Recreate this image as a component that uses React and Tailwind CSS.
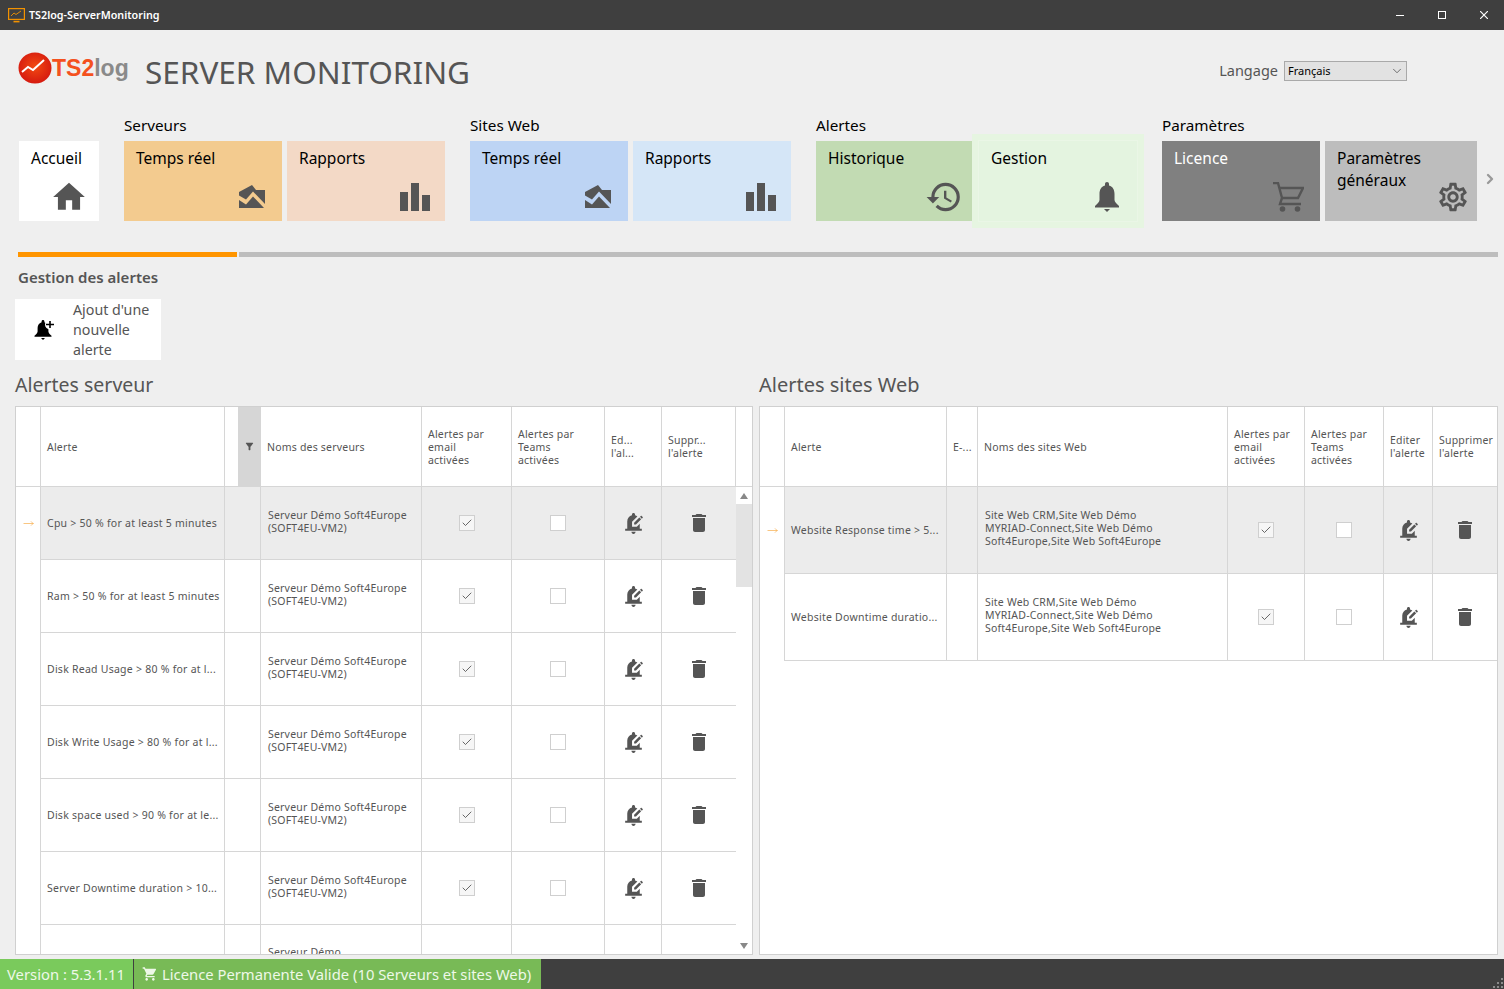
import { Check, ChevronRight, ChevronDown, MoveRight } from 'lucide-react';
import { MdHome, MdHistory, MdOutlineSettings, MdEditNotifications, MdDelete, MdShoppingCart, MdFilterAlt } from 'react-icons/md';

const serverRows = [
  { alert: 'Cpu > 50 % for at least 5 minutes' },
  { alert: 'Ram > 50 % for at least 5 minutes' },
  { alert: 'Disk Read Usage > 80 % for at l...' },
  { alert: 'Disk Write Usage > 80 % for at l...' },
  { alert: 'Disk space used > 90 % for at le...' },
  { alert: 'Server Downtime duration > 10...' },
];

const webRows = [
  { alert: 'Website Response time > 5...' },
  { alert: 'Website Downtime duratio...' },
];

const serverCols = 'grid grid-cols-[25px_184px_36px_161px_90px_93px_57px_74px]';
const webCols = 'grid grid-cols-[25px_162px_31px_250px_77px_79px_49px_64px]';

const AreaIcon = () => (
  <svg width="26" height="23" viewBox="0 0 26 23" fill="#555">
    <path d="M0 7 L13 0 L17 5 L26 5 L26 19 L14 6.5 L7 14.5 L0 10.5 Z" />
    <path d="M0 15 L7 19.5 L14 11.5 L25 23 L0 23 Z" />
  </svg>
);

const BarsIcon = () => (
  <svg width="30" height="28" viewBox="0 0 30 28" fill="#555">
    <rect x="0" y="9" width="8" height="19" />
    <rect x="11" y="0" width="8" height="28" />
    <rect x="22" y="12" width="8" height="16" />
  </svg>
);

const BellIcon = () => (
  <svg width="24" height="30" viewBox="0 0 24 30" fill="#555">
    <path d="M12 0 C13.2 0 14 .8 14 2 V3.5 C18 4.5 19.5 8 19.5 12 V18 C19.5 20 22 22 24 24 V25.5 H0 V24 C2 22 4.5 20 4.5 18 V12 C4.5 8 6 4.5 10 3.5 V2 C10 .8 10.8 0 12 0 Z" />
    <path d="M9 27 H15 L12 30 Z" />
  </svg>
);

const BellPlusIcon = () => (
  <svg width="21" height="21" viewBox="0 0 21 21" fill="#000">
    <path d="M9 1 C9.8 1 10.4 1.6 10.4 2.4 V3.2 C13.2 4 14.4 6.4 14.4 9 V12.5 C14.4 14 16 15.4 17.5 16.8 V17.8 H0.5 V16.8 C2 15.4 3.6 14 3.6 12.5 V9 C3.6 6.4 4.8 4 7.6 3.2 V2.4 C7.6 1.6 8.2 1 9 1 Z" />
    <path d="M7 19 H11 L9 21 Z" />
    <circle cx="16" cy="5.5" r="5" fill="#fff" />
    <path d="M15.2 2 H16.8 V4.7 H20 V6.3 H16.8 V9 H15.2 V6.3 H12 V4.7 H15.2 Z" />
  </svg>
);

const CartIcon = () => (
  <svg width="31" height="30" viewBox="0 0 31 30" fill="none" stroke="#555" strokeWidth="2.4">
    <path d="M0 1 H5 L9 16 L7 22 H28" />
    <path d="M7 6 H30 L25 16 H9" />
    <circle cx="9.5" cy="27" r="2.8" fill="#555" stroke="none" />
    <circle cx="24.5" cy="27" r="2.8" fill="#555" stroke="none" />
  </svg>
);

const Tile = ({ label, bg, text = 'text-black', icon, iconPos = 'bottom-[13px] right-[17px]', wide = 'w-[158px]', extra = '' }) => (
  <div className={`relative h-20 ${wide} ${bg} ${extra} px-3 pt-[6px] text-[15.5px] leading-[22px] ${text}`}>
    {label}
    <div className={`absolute ${iconPos}`}>{icon}</div>
  </div>
);

const Group = ({ title, children }) => (
  <div>
    <div className="h-[31px] pt-[4px] text-[15.25px] leading-[22px] text-black">{title}</div>
    <div className="flex gap-[5px]">{children}</div>
  </div>
);

const Cell = ({ children, line = true, center = false, className = '' }) => (
  <div className={`flex items-center border-[#d6d6d6] ${line ? 'border-r' : ''} ${center ? 'justify-center' : ''} ${className}`}>
    {children}
  </div>
);

const CheckBox = ({ checked }) => (
  <div className={`flex h-4 w-4 items-center justify-center border border-[#cfcfcf] ${checked ? 'bg-[#f6f6f6]' : 'bg-white'}`}>
    {checked && <Check size={12} strokeWidth={1.6} color="#444" />}
  </div>
);

const HeadText = ({ children, tight }) => (
  <div className={`px-[6px] text-[10.5px] leading-[13px] tracking-[0.2px] text-[#555] ${tight ? '' : 'pt-[2px]'}`}>{children}</div>
);

const Row = ({ cols, height, selected, alert, names, namesPad, blank }) => {
  const bg = selected ? 'bg-[#ececec]' : '';
  return (
    <div className={`${cols} ${height}`}>
      <Cell center className="text-[#f59a23]">
        {selected && <MoveRight size={11} strokeWidth={1.25} />}
      </Cell>
      <Cell className={`border-b px-[6px] pt-[2px] text-[10.5px] tracking-[0.25px] whitespace-nowrap text-[#555] ${bg}`}>
        {alert}
      </Cell>
      <Cell className={`border-b ${bg}`} />
      <Cell className={`border-b px-[7px] text-[10.5px] leading-[13px] tracking-[0.2px] text-[#555] ${namesPad} ${bg}`}>
        <div>{names}</div>
      </Cell>
      <Cell center className={`border-b ${bg}`}>
        {!blank && <CheckBox checked />}
      </Cell>
      <Cell center className={`border-b ${bg}`}>
        {!blank && <CheckBox />}
      </Cell>
      <Cell center className={`border-b ${bg}`}>
        {!blank && <MdEditNotifications size={25} color="#555" />}
      </Cell>
      <Cell center line={false} className={`border-b ${bg}`}>
        {!blank && <MdDelete size={24} color="#555" />}
      </Cell>
    </div>
  );
};

const ServerTable = () => (
  <div className="flex h-[549px] w-[738px] flex-col overflow-hidden border border-[#d0d0d0] bg-white">
    <div className="flex h-20 shrink-0 border-b border-[#d6d6d6]">
      <div className={`${serverCols} h-full`}>
        <Cell />
        <Cell><HeadText>Alerte</HeadText></Cell>
        <Cell className="justify-end">
          <div className="flex h-full w-[22px] items-center justify-center bg-[#d6d6d6]">
            <MdFilterAlt size={11} color="#555" />
          </div>
        </Cell>
        <Cell><HeadText>Noms des serveurs</HeadText></Cell>
        <Cell><HeadText>Alertes par<br />email<br />activées</HeadText></Cell>
        <Cell><HeadText>Alertes par<br />Teams<br />activées</HeadText></Cell>
        <Cell><HeadText tight>Ed...<br />l'al...</HeadText></Cell>
        <Cell><HeadText tight>Suppr...<br />l'alerte</HeadText></Cell>
      </div>
    </div>
    <div className="flex min-h-0 flex-1">
      <div className="w-[720px] overflow-hidden">
        {serverRows.map((r, i) => (
          <Row
            key={r.alert}
            cols={serverCols}
            height="h-[73px]"
            namesPad="pb-[2px]"
            selected={i === 0}
            alert={r.alert}
            names={<>Serveur Démo Soft4Europe<br />(SOFT4EU-VM2)</>}
          />
        ))}
        <Row cols={serverCols} height="h-[73px]" namesPad="pb-[4px]" blank alert="" names={<>Serveur Démo<br />Soft4Europe</>} />
      </div>
      <div className="flex w-4 flex-col">
        <div className="flex h-[17px] items-center justify-center">
          <div className="h-0 w-0 border-x-[4px] border-b-[6px] border-x-transparent border-b-[#888]" />
        </div>
        <div className="h-[83px] bg-[#e3e3e3]" />
        <div className="flex-1" />
        <div className="flex h-[17px] items-center justify-center">
          <div className="h-0 w-0 border-x-[4px] border-t-[6px] border-x-transparent border-t-[#888]" />
        </div>
      </div>
    </div>
  </div>
);

const WebTable = () => (
  <div className="h-[549px] w-[739px] border border-[#d0d0d0] bg-white">
    <div className="h-20 border-b border-[#d6d6d6]">
      <div className={`${webCols} h-full`}>
        <Cell />
        <Cell><HeadText>Alerte</HeadText></Cell>
        <Cell><HeadText>E-...</HeadText></Cell>
        <Cell><HeadText>Noms des sites Web</HeadText></Cell>
        <Cell><HeadText>Alertes par<br />email<br />activées</HeadText></Cell>
        <Cell><HeadText>Alertes par<br />Teams<br />activées</HeadText></Cell>
        <Cell><HeadText tight>Editer<br />l'alerte</HeadText></Cell>
        <Cell line={false}><HeadText tight>Supprimer<br />l'alerte</HeadText></Cell>
      </div>
    </div>
    {webRows.map((r, i) => (
      <Row
        key={r.alert}
        cols={webCols}
        height="h-[87px]"
        namesPad="pb-[4px]"
        selected={i === 0}
        alert={r.alert}
        names={<>Site Web CRM,Site Web Démo<br />MYRIAD-Connect,Site Web Démo<br />Soft4Europe,Site Web Soft4Europe</>}
      />
    ))}
  </div>
);

export default function App() {
  return (
    <div className="flex h-[989px] w-[1504px] flex-col overflow-hidden bg-[#efefef] font-['Noto_Sans',sans-serif]">
      {/* Title bar */}
      <div className="flex h-[30px] shrink-0 items-center bg-[#3f3f3f] pl-2 text-white">
        <svg width="17" height="15" viewBox="0 0 17 15" fill="none" stroke="#f39200" strokeWidth="1.2">
          <rect x="0.6" y="0.6" width="15.8" height="10.8" />
          <path d="M3 8 L6 5 L8 6.5 L13 3" strokeWidth="0.9" />
          <path d="M5.5 13.6 H11.5" strokeWidth="1.6" />
        </svg>
        <span className="ml-1 text-[10.75px] font-semibold">TS2log-ServerMonitoring</span>
        <div className="ml-auto flex items-center">
          <div className="flex w-[42px] justify-center">
            <svg width="8" height="8" viewBox="0 0 8 8" stroke="#fff"><path d="M0 4.5 H8" /></svg>
          </div>
          <div className="flex w-[42px] justify-center">
            <svg width="8" height="8" viewBox="0 0 8 8" fill="none" stroke="#fff"><rect x="0.5" y="0.5" width="7" height="7" /></svg>
          </div>
          <div className="flex w-[41px] justify-center">
            <svg width="8" height="8" viewBox="0 0 8 8" stroke="#fff" strokeWidth="1.2"><path d="M0 0 L8 8 M8 0 L0 8" /></svg>
          </div>
        </div>
      </div>

      {/* Logo and language */}
      <div className="flex h-[80px] shrink-0 items-center pl-[18px]">
        <div className="mb-[4px] flex w-[127px] items-center">
          <svg width="34" height="32" viewBox="0 0 34 32" className="shrink-0">
            <defs>
              <radialGradient id="logoRed" cx="50%" cy="45%" r="60%">
                <stop offset="0%" stopColor="#f24a12" />
                <stop offset="100%" stopColor="#d3160f" />
              </radialGradient>
            </defs>
            <ellipse cx="17" cy="16" rx="16.5" ry="15.5" fill="url(#logoRed)" />
            <path d="M4 20 L10 15 L15 18 L26 8" fill="none" stroke="#fff" strokeWidth="2" />
          </svg>
          <span className="font-['Liberation_Sans',sans-serif] text-[23px] font-bold text-[#f4511e]">TS2</span>
          <span className="font-['Liberation_Sans',sans-serif] text-[23px] font-bold text-[#8a8a8a]">log</span>
        </div>
        <div className="mt-[4px] text-[31.5px] text-[#555]">SERVER MONITORING</div>
        <div className="mt-[2px] ml-auto mr-[97px] flex items-center gap-[6px]">
          <span className="text-[14.5px] text-[#555]">Langage</span>
          <div className="flex h-5 w-[123px] items-center justify-between border border-[#a9a9a9] bg-[#e2e2e2] pl-[3px] pr-[2px] text-[11px] text-black">
            Français
            <ChevronDown size={14} strokeWidth={1.25} color="#444" />
          </div>
        </div>
      </div>

      {/* Navigation tiles */}
      <div className="flex h-[111px] shrink-0 pl-[19px]">
        <div className="relative mt-[31px] mr-[25px] h-20 w-20 bg-white pl-3 pt-[6px] text-[15.5px] leading-[22px] text-black">
          Accueil
          <div className="absolute bottom-[5px] right-[11px]"><MdHome size={38} color="#555" /></div>
        </div>
        <div className="flex gap-[25px]">
          <Group title="Serveurs">
            <Tile label="Temps réel" bg="bg-[#f3cb8f]" icon={<AreaIcon />} />
            <Tile label="Rapports" bg="bg-[#f3d9c6]" iconPos="bottom-[10px] right-[15px]" icon={<BarsIcon />} />
          </Group>
          <Group title="Sites Web">
            <Tile label="Temps réel" bg="bg-[#bdd4f4]" icon={<AreaIcon />} />
            <Tile label="Rapports" bg="bg-[#d5e6f7]" iconPos="bottom-[10px] right-[15px]" icon={<BarsIcon />} />
          </Group>
          <Group title="Alertes">
            <Tile label="Historique" bg="bg-[#c2dbb3]" iconPos="bottom-[5px] right-[11px]" icon={<MdHistory size={38} color="#555" />} />
            <Tile
              label="Gestion"
              bg="bg-[#e4f4e0]"
              extra="shadow-[0_0_0_1px_#eaf6e6,0_0_0_7px_#e6f5e1]"
              iconPos="bottom-[9px] right-[18px]"
              icon={<BellIcon />}
            />
          </Group>
          <div className="flex items-start">
            <Group title="Paramètres">
              <Tile label="Licence" bg="bg-[#808080]" text="text-white" iconPos="bottom-[9px] right-[16px]" icon={<CartIcon />} />
              <Tile
                label={<>Paramètres<br />généraux</>}
                bg="bg-[#bdbdbd]"
                wide="w-[152px]"
                iconPos="bottom-[7px] right-[7px]"
                icon={<MdOutlineSettings size={34} color="#555" />}
              />
            </Group>
            <ChevronRight size={16} strokeWidth={3.5} color="#999" className="mt-[61px] ml-[5px]" />
          </div>
        </div>
      </div>

      {/* Page tabs progress */}
      <div className="mt-[31px] flex h-[5px] shrink-0 gap-[2px] pl-[18px] pr-[6px]">
        <div className="w-[219px] bg-[#ff9500]" />
        <div className="flex-1 bg-[#bdbdbd]" />
      </div>

      <div className="flex min-h-0 flex-1 flex-col pl-[15px] pr-[6px]">
        <div className="pl-[3px] pt-[8px] text-[15px] leading-[24px] font-semibold text-[#555]">Gestion des alertes</div>
        <div className="mt-[10px] flex h-[61px] w-[146px] items-center bg-white">
          <div className="flex w-[58px] justify-center"><BellPlusIcon /></div>
          <div className="text-[14.25px] leading-[20px] text-[#555]">Ajout d'une<br />nouvelle<br />alerte</div>
        </div>
        <div className="mt-[10px] flex gap-[6px]">
          <div>
            <div className="h-[36px] text-[19.5px] leading-[30px] text-[#555]">Alertes serveur</div>
            <ServerTable />
          </div>
          <div>
            <div className="h-[36px] text-[20px] leading-[30px] text-[#555]">Alertes sites Web</div>
            <WebTable />
          </div>
        </div>
      </div>

      {/* Status bar */}
      <div className="flex h-[30px] shrink-0 items-center bg-[#3f3f3f] text-[14.8px] whitespace-nowrap text-[#eef8e8]">
        <div className="flex h-full w-[133px] items-center bg-[#7aca5c] pl-[7px]">Version : 5.3.1.11</div>
        <div className="ml-px flex h-full w-[407px] items-center bg-[#78ba56] pl-[8px]">
          <MdShoppingCart size={16} className="mr-[4px]" />
          Licence Permanente Valide (10 Serveurs et sites Web)
        </div>
        <svg width="11" height="11" viewBox="0 0 11 11" fill="#8a8a8a" className="mt-auto ml-auto">
          <rect x="8" y="0" width="2" height="2" />
          <rect x="4" y="4" width="2" height="2" />
          <rect x="8" y="4" width="2" height="2" />
          <rect x="0" y="8" width="2" height="2" />
          <rect x="4" y="8" width="2" height="2" />
          <rect x="8" y="8" width="2" height="2" />
        </svg>
      </div>
    </div>
  );
}
